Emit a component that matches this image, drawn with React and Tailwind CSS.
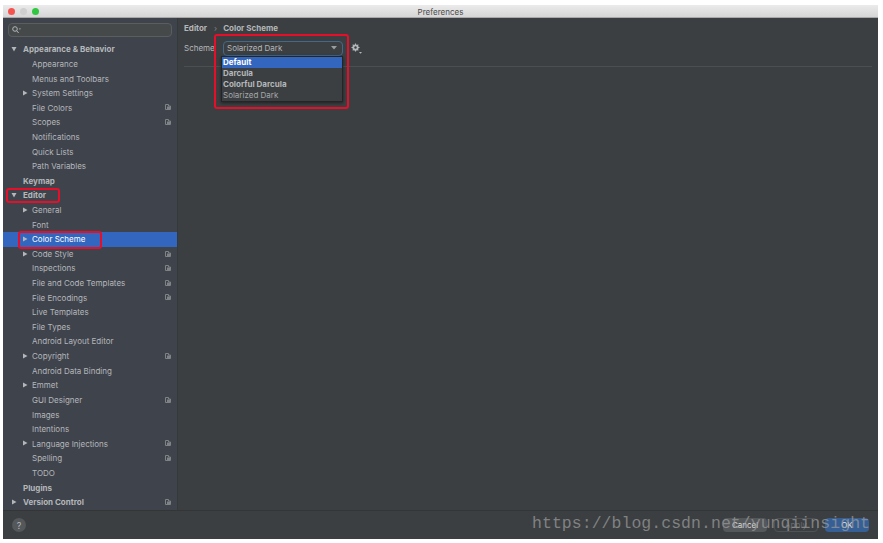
const ROWS = [
  { label: 'Appearance & Behavior', top: true, arrow: 'down' },
  { label: 'Appearance' },
  { label: 'Menus and Toolbars' },
  { label: 'System Settings', arrow: 'right' },
  { label: 'File Colors', mark: true },
  { label: 'Scopes', mark: true },
  { label: 'Notifications' },
  { label: 'Quick Lists' },
  { label: 'Path Variables' },
  { label: 'Keymap', top: true },
  { label: 'Editor', top: true, arrow: 'down' },
  { label: 'General', arrow: 'right' },
  { label: 'Font' },
  { label: 'Color Scheme', arrow: 'right', active: true },
  { label: 'Code Style', arrow: 'right', mark: true },
  { label: 'Inspections', mark: true },
  { label: 'File and Code Templates', mark: true },
  { label: 'File Encodings', mark: true },
  { label: 'Live Templates' },
  { label: 'File Types' },
  { label: 'Android Layout Editor' },
  { label: 'Copyright', arrow: 'right', mark: true },
  { label: 'Android Data Binding' },
  { label: 'Emmet', arrow: 'right' },
  { label: 'GUI Designer', mark: true },
  { label: 'Images' },
  { label: 'Intentions' },
  { label: 'Language Injections', arrow: 'right', mark: true },
  { label: 'Spelling', mark: true },
  { label: 'TODO' },
  { label: 'Plugins', top: true },
  { label: 'Version Control', top: true, arrow: 'right', mark: true },
]

function Arrow({ dir, className }) {
  return (
    <svg width="6" height="6" viewBox="0 0 6 6" className={className}>
      {dir === 'down'
        ? <path d="M0.5 1 L5.5 1 L3 5.5 Z" fill="#b4b7ba" />
        : <path d="M1 0.5 L5.5 3 L1 5.5 Z" fill="#b4b7ba" />}
    </svg>
  )
}

function ProjectMark() {
  return (
    <svg width="6" height="6" viewBox="0 0 6 6" className="absolute left-[162px] top-[4px]">
      <path d="M0.5 0.5 H3.5 V2 H5.5 V5.5 H0.5 Z" fill="none" stroke="#7f8386" strokeWidth="1" />
      <rect x="2" y="2.5" width="3" height="2.5" fill="#7f8386" />
    </svg>
  )
}

function TreeRow({ row }) {
  return (
    <div className={`relative h-[14.61px] flex items-center leading-none ${row.active ? 'bg-[#3366bf] text-white' : 'text-[#b4b7ba]'} ${row.top ? 'pl-[20px] font-bold' : 'pl-[29px]'}`}>
      {row.arrow && <Arrow dir={row.arrow} className={`absolute top-[4px] ${row.top ? 'left-[8px]' : 'left-[19px]'}`} />}
      {row.label}
      {row.mark && <ProjectMark />}
    </div>
  )
}

function Sidebar() {
  return (
    <div className="w-[175px] bg-[#3f434c] border-r border-[#36393b] pt-[5px] shrink-0">
      <div className="mx-[5px] h-[14px] flex items-center gap-px px-[3px] bg-[#45494a] border border-[#5b5e5f] rounded-sm">
        <svg width="9" height="8" viewBox="0 0 9 8">
          <circle cx="3" cy="3" r="2.3" fill="none" stroke="#b4b7ba" strokeWidth="1" />
          <path d="M4.7 4.7 L6.6 7" stroke="#b4b7ba" strokeWidth="1" />
          <path d="M6.8 2.6 H9 L7.9 3.8 Z" fill="#b4b7ba" />
        </svg>
      </div>
      <div className="mt-[5px]">
        {ROWS.map(row => <TreeRow key={row.label} row={row} />)}
      </div>
    </div>
  )
}

function GearIcon() {
  return (
    <svg width="11" height="11" viewBox="0 0 11 11" className="ml-[8px]">
      <circle cx="4.5" cy="4.5" r="2.3" fill="none" stroke="#b4b7ba" strokeWidth="1.6" />
      <path d="M4.5 0.5 V8.5 M0.5 4.5 H8.5 M1.7 1.7 L7.3 7.3 M7.3 1.7 L1.7 7.3" stroke="#b4b7ba" strokeWidth="1.1" />
      <circle cx="4.5" cy="4.5" r="1.2" fill="#3c3f41" />
      <path d="M8 9 H11 L9.5 10.8 Z" fill="#b4b7ba" />
    </svg>
  )
}

function SchemePanel() {
  return (
    <div className="flex-1 min-w-0 px-[6px] pt-[5px] text-[#b4b7ba]">
      <div className="h-[10px] flex items-center font-bold leading-none">
        <span>Editor</span>
        <span className="ml-[7px] mr-[6px] font-normal text-[#808487]">›</span>
        <span>Color Scheme</span>
      </div>
      <div className="mt-[7px] flex items-center h-[16px]">
        <span className="w-[39px] leading-none pb-px">Scheme</span>
        <div className="relative w-[120px] h-[15px] flex items-center justify-between pl-[3px] pr-[4px] border border-[#41698c] rounded-sm bg-[#3c3f41]">
          <span className="leading-none pb-px">Solarized Dark</span>
          <svg width="6" height="4" viewBox="0 0 6 4" className="mr-[1px]"><path d="M0 0 H6 L3 3.5 Z" fill="#9a9da0" /></svg>
          <div className="absolute left-[-3px] top-[14px] w-[122px] h-[46px] bg-[#3c3f41] border border-[#232527] shadow-[0_1px_3px_rgba(0,0,0,0.5)] leading-none z-10">
            <div className="h-[11px] flex items-center pl-px bg-[#3366bf] text-white font-bold">Default</div>
            <div className="h-[11px] flex items-center pl-px font-bold">Darcula</div>
            <div className="h-[11px] flex items-center pl-px font-bold">Colorful Darcula</div>
            <div className="h-[11px] flex items-center pl-px text-[#a4a7aa]">Solarized Dark</div>
          </div>
        </div>
        <GearIcon />
      </div>
      <div className="mt-[10px] h-px bg-[#4c4f51]" />
    </div>
  )
}

function Footer() {
  return (
    <div className="h-[29px] shrink-0 flex items-center justify-between pl-[9px] pr-[9px] bg-[#3c3f41] border-t border-[#333537] leading-none">
      <div className="w-[14px] h-[14px] rounded-full bg-[#55585a] flex items-center justify-center text-[#b4b7ba] text-[9px]">?</div>
      <div className="flex gap-[7px]">
        <div className="w-[44px] h-[14px] rounded-sm bg-[#55585a] text-[#d5d7d8] flex items-center justify-center">Cancel</div>
        <div className="w-[44px] h-[14px] rounded-sm border border-[#505355] text-[#66696b] flex items-center justify-center">Apply</div>
        <div className="w-[44px] h-[14px] rounded-sm bg-[#365f96] text-[#e3e6ea] flex items-center justify-center">OK</div>
      </div>
    </div>
  )
}

export default function App() {
  return (
    <div className="relative w-[883px] h-[543px] overflow-hidden bg-white pl-[3px] pt-[5px] text-[8px] font-['Inter',sans-serif]">
      <div className="w-[875px] h-[534px] flex flex-col bg-[#3c3f41]">
        {/* Title bar */}
        <div className="relative h-[13px] shrink-0 flex items-center justify-center pt-px bg-gradient-to-b from-[#ebebeb] to-[#d6d6d6] border-b border-[#a9a9a9] text-[#4a4a4a] leading-none">
          <div className="absolute left-[5px] top-[3px] flex gap-[5px]">
            <span className="w-[7px] h-[7px] rounded-full bg-[#f6534f]" />
            <span className="w-[7px] h-[7px] rounded-full bg-[#cfcfcf]" />
            <span className="w-[7px] h-[7px] rounded-full bg-[#2fc840]" />
          </div>
          Preferences
        </div>
        <div className="flex flex-1 min-h-0">
          <Sidebar />
          <SchemePanel />
        </div>
        <Footer />
      </div>

      {/* Red annotation boxes */}
      <div className="absolute left-[214px] top-[34px] w-[135px] h-[75px] border-2 border-[#e60f2a] rounded-[3px] z-20" />
      <div className="absolute left-[6px] top-[188px] w-[54px] h-[15px] border-2 border-[#e60f2a] rounded-[3px] z-20" />
      <div className="absolute left-[18px] top-[231px] w-[84px] h-[18px] border-2 border-[#e60f2a] rounded-[3px] z-20" />

      {/* Watermark */}
      <div className="absolute left-[532px] top-[514px] text-[16.5px] leading-[20px] tracking-[0.04px] text-[#97999a]/75 font-['Liberation_Mono',monospace] z-20">https://blog.csdn.net/yunqiinsight</div>
    </div>
  )
}
